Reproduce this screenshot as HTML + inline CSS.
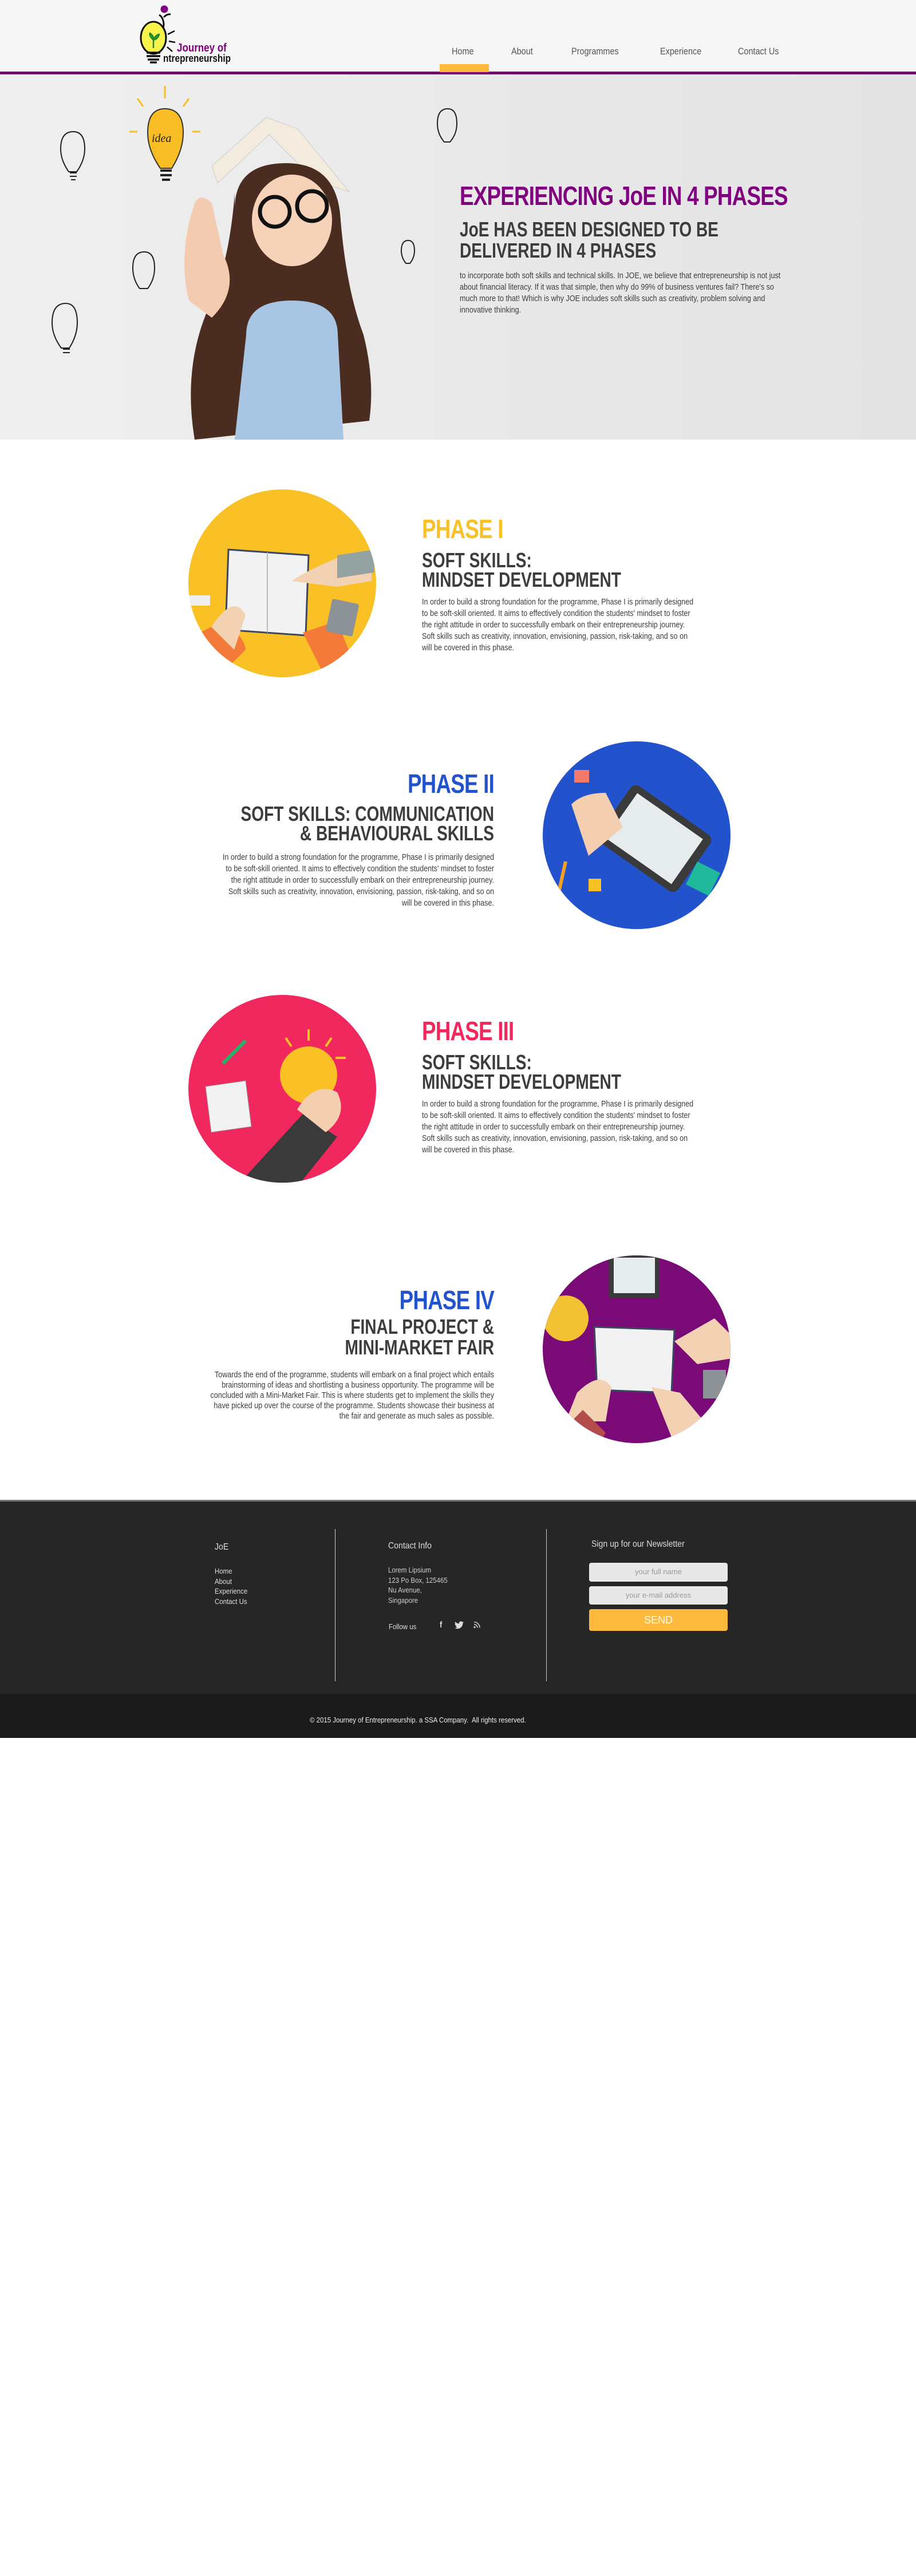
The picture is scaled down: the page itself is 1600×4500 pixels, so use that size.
<!DOCTYPE html>
<html><head><meta charset="utf-8"><style>
*{margin:0;padding:0;box-sizing:border-box}
body{width:1600px;height:4500px;background:#fff;font-family:"Liberation Sans",sans-serif;color:#3a3a3a;position:relative;overflow:hidden}
.abs{position:absolute}
.hdr{left:0;top:0;width:1600px;height:130px;background:#f6f6f6;border-bottom:5px solid #800080}
.nav{top:80px;font-size:17px;color:#555;transform:scaleX(.85);transform-origin:left top}
.hero{left:0;top:130px;width:1600px;height:638px;background:linear-gradient(90deg,#efefef,#e8e8e8 60%,#e4e4e4)}
.ph{font-weight:bold;font-size:46px;letter-spacing:-1px;line-height:48px;transform:scaleX(.8);transform-origin:left top}
.sub{font-weight:bold;font-size:36px;line-height:34px;color:#3d3d3d;transform:scaleX(.78);transform-origin:left top;white-space:nowrap}
.par{font-size:15px;line-height:20px;color:#3d3d3d;transform:scaleX(.84);transform-origin:left top}
.r{text-align:right;transform-origin:right top}
.circ{border-radius:50%;overflow:hidden}
.foot{left:0;top:2620px;width:1600px;height:339px;background:#262626;border-top:3px solid #777}
.fb{left:0;top:2959px;width:1600px;height:77px;background:#1b1b1b}
.fw{color:#ddd;transform:scaleX(.88);transform-origin:left top;white-space:nowrap}
.inp{background:#e8e8e8;border-radius:4px;color:#999;font-size:13px;text-align:center;line-height:32px}
</style></head><body>

<div class="abs hdr"></div>
<svg class="abs" style="left:230px;top:0" width="200" height="125" viewBox="0 0 200 125">
<circle cx="57" cy="16" r="6.5" fill="#800080"/>
<path d="M48 26 Q55 30 56 42 L55 52 M56 30 Q62 24 68 25" stroke="#111" stroke-width="3" fill="none"/>
<ellipse cx="38" cy="66" rx="22" ry="28" fill="#f8f34a" stroke="#111" stroke-width="3"/>
<path d="M38 84 L38 66 M38 70 Q30 62 32 58 Q38 62 38 68 M38 68 Q44 60 48 60 Q46 68 38 70" stroke="#1a8a2a" stroke-width="2.5" fill="#2aa040"/>
<path d="M26 92 h24 M26 98 h24 M28 104 h20 M32 109 h12" stroke="#111" stroke-width="3.5"/>
<path d="M63 60 l12 -6 M65 72 l11 2 M62 82 l9 8" stroke="#111" stroke-width="2.5"/>
<text x="79" y="90" font-family="Liberation Sans,sans-serif" font-size="20" font-weight="bold" fill="#800080" transform="scale(.85,1)" transform-origin="79 90">Journey of</text>
<text x="55" y="108" font-family="Liberation Sans,sans-serif" font-size="18" font-weight="bold" fill="#111" textLength="118" lengthAdjust="spacingAndGlyphs">ntrepreneurship</text>
</svg>
<div class="abs" style="left:768px;top:112px;width:86px;height:14px;background:#fdb93b"></div>
<div class="abs nav" style="left:789px">Home</div>
<div class="abs nav" style="left:893px">About</div>
<div class="abs nav" style="left:998px">Programmes</div>
<div class="abs nav" style="left:1153px">Experience</div>
<div class="abs nav" style="left:1289px">Contact Us</div>

<div class="abs hero"></div>
<svg class="abs" style="left:0;top:130px" width="900" height="640">
<g stroke="#222" stroke-width="2" fill="none">
<path d="M128 100 q-22 0 -22 30 q0 20 14 40 h14 q14 -20 14 -40 q0 -30 -20 -30z"/><path d="M122 172 h12 M122 178 h12 M124 184 h8"/>
<path d="M252 310 q-20 0 -20 28 q0 20 12 36 h14 q12 -16 12 -36 q0 -28 -18 -28z"/>
<path d="M115 400 q-24 0 -24 34 q0 22 16 44 h14 q14 -22 14 -44 q0 -34 -20 -34z"/><path d="M110 480 h12 M110 486 h12"/>
<path d="M782 60 q-18 0 -18 26 q0 18 12 32 h10 q12 -14 12 -32 q0 -26 -16 -26z"/>
<path d="M713 290 q-12 0 -12 18 q0 12 8 22 h7 q8 -10 8 -22 q0 -18 -11 -18z"/>
</g>
<path d="M288 60 q-30 0 -30 42 q0 30 22 62 h20 q20 -32 20 -62 q0 -42 -32 -42z" fill="#f8bd24" stroke="#333" stroke-width="2"/>
<path d="M280 168 h20 M280 176 h20 M283 184 h14" stroke="#222" stroke-width="4"/>
<text x="265" y="118" font-family="Liberation Serif,serif" font-style="italic" font-size="20" fill="#222">idea</text>
<g stroke="#f8bd24" stroke-width="3"><path d="M288 20 v22 M240 42 l10 14 M330 42 l-10 14 M226 100 h14 M336 100 h14"/></g>
</svg>
<svg class="abs" style="left:300px;top:195px" width="380" height="573" viewBox="0 0 380 573">
<path d="M70 95 L165 10 L220 30 L310 140 L250 120 L170 40 L80 125z" fill="#f3ebdd" stroke="#ccc"/>
<path d="M110 170 q0 -80 90 -80 q90 0 95 100 q10 120 40 200 q20 80 10 150 L40 573 q-20 -120 20 -220 q40 -80 50 -210z" fill="#4a2d20"/>
<ellipse cx="210" cy="190" rx="70" ry="80" fill="#f6d2b8"/>
<circle cx="180" cy="175" r="26" fill="none" stroke="#111" stroke-width="7"/>
<circle cx="245" cy="165" r="26" fill="none" stroke="#111" stroke-width="7"/>
<path d="M130 390 q0 -60 80 -60 q80 0 80 60 L300 573 H110z" fill="#a8c6e4"/>
<path d="M30 330 q-20 -80 10 -170 q10 -20 30 0 l20 90 q30 60 -20 110z" fill="#f3cbb0"/>
</svg>
<div class="abs ph" style="left:803px;top:318px;color:#800080;white-space:nowrap">EXPERIENCING JoE IN 4 PHASES</div>
<div class="abs sub" style="left:803px;top:382px;line-height:37px">JoE HAS BEEN DESIGNED TO BE<br>DELIVERED IN 4 PHASES</div>
<div class="abs par" style="left:803px;top:472px;width:670px">to incorporate both soft skills and technical skills. In JOE, we believe that entrepreneurship is not just about financial literacy. If it was that simple, then why do 99% of business ventures fail? There's so much more to that! Which is why JOE includes soft skills such as creativity, problem solving and innovative thinking.</div>

<!-- Phase I -->
<div class="abs circ" style="left:329px;top:855px;width:328px;height:328px;background:#f9c125">
<svg width="328" height="328"><path d="M70 105 L210 115 L205 255 L65 245z" fill="#f2f2f2" stroke="#3b4660" stroke-width="3"/><path d="M138 110 v140" stroke="#bbb" stroke-width="2"/><path d="M180 160 q30 -20 80 -40 l60 -10 v50 l-60 10z" fill="#f3d2b4"/><path d="M260 115 l65 -10 v40 l-65 10z" fill="#94a3a2"/><path d="M0 260 l60 -30 q40 30 40 50 l-60 60z" fill="#f47a39"/><path d="M40 240 q40 -60 60 -20 l-20 60z" fill="#f3d2b4"/><path d="M200 250 l60 -20 l40 100 h-60z" fill="#f47a39"/><rect x="245" y="195" width="48" height="58" rx="4" fill="#8c9296" transform="rotate(12 269 224)"/><rect x="0" y="185" width="38" height="18" fill="#eee"/></svg></div>
<div class="abs ph" style="left:737px;top:900px;color:#f9c125">PHASE I</div>
<div class="abs sub" style="left:737px;top:962px">SOFT SKILLS:<br>MINDSET DEVELOPMENT</div>
<div class="abs par" style="left:737px;top:1042px;width:575px">In order to build a strong foundation for the programme, Phase I is primarily designed to be soft-skill oriented. It aims to effectively condition the students' mindset to foster the right attitude in order to successfully embark on their entrepreneurship journey. Soft skills such as creativity, innovation, envisioning, passion, risk-taking, and so on will be covered in this phase.</div>

<!-- Phase II -->
<div class="abs ph r" style="left:263px;top:1345px;width:600px;color:#2353cc">PHASE II</div>
<div class="abs sub r" style="left:163px;top:1405px;width:700px">SOFT SKILLS: COMMUNICATION<br>&amp; BEHAVIOURAL SKILLS</div>
<div class="abs par r" style="left:288px;top:1488px;width:575px">In order to build a strong foundation for the programme, Phase I is primarily designed to be soft-skill oriented. It aims to effectively condition the students' mindset to foster the right attitude in order to successfully embark on their entrepreneurship journey. Soft skills such as creativity, innovation, envisioning, passion, risk-taking, and so on will be covered in this phase.</div>
<div class="abs circ" style="left:948px;top:1295px;width:328px;height:328px;background:#2353cc">
<svg width="328" height="328"><rect x="110" y="110" width="170" height="120" rx="12" fill="#3a3a3a" transform="rotate(35 195 170)"/><rect x="125" y="122" width="140" height="96" fill="#e6ebee" transform="rotate(35 195 170)"/><path d="M50 110 q20 -20 60 -20 l30 60 l-60 50z" fill="#f3cfb0"/><rect x="55" y="50" width="26" height="22" fill="#f47a6a"/><rect x="80" y="240" width="22" height="22" fill="#f9c125"/><path d="M270 210 l40 20 l-20 40 l-40 -20z" fill="#1fb89a"/><path d="M40 210 l-20 90" stroke="#f4a020" stroke-width="6"/></svg></div>

<!-- Phase III -->
<div class="abs circ" style="left:329px;top:1738px;width:328px;height:328px;background:#f0285d">
<svg width="328" height="328"><circle cx="210" cy="140" r="50" fill="#f9c125"/><path d="M30 160 l70 -10 l10 80 l-70 10z" fill="#f2f2f2" stroke="#999"/><path d="M90 328 l110 -120 l60 40 l-80 100z" fill="#3a3a3a"/><path d="M190 200 q30 -50 70 -30 q20 40 -20 70z" fill="#f3cfb0"/><path d="M60 120 l40 -40" stroke="#2ab06a" stroke-width="6"/><g stroke="#f9c125" stroke-width="4"><path d="M210 60 v20 M250 75 l-10 15 M170 75 l10 15 M275 110 h-18"/></g></svg></div>
<div class="abs ph" style="left:737px;top:1777px;color:#f0285d">PHASE III</div>
<div class="abs sub" style="left:737px;top:1839px">SOFT SKILLS:<br>MINDSET DEVELOPMENT</div>
<div class="abs par" style="left:737px;top:1919px;width:575px">In order to build a strong foundation for the programme, Phase I is primarily designed to be soft-skill oriented. It aims to effectively condition the students' mindset to foster the right attitude in order to successfully embark on their entrepreneurship journey. Soft skills such as creativity, innovation, envisioning, passion, risk-taking, and so on will be covered in this phase.</div>

<!-- Phase IV -->
<div class="abs ph r" style="left:263px;top:2247px;width:600px;color:#2353cc">PHASE IV</div>
<div class="abs sub r" style="left:163px;top:2300px;width:700px;line-height:36px">FINAL PROJECT &amp;<br>MINI-MARKET FAIR</div>
<div class="abs par r" style="left:268px;top:2393px;width:595px;line-height:18px">Towards the end of the programme, students will embark on a final project which entails brainstorming of ideas and shortlisting a business opportunity. The programme will be concluded with a Mini-Market Fair. This is where students get to implement the skills they have picked up over the course of the programme. Students showcase their business at the fair and generate as much sales as possible.</div>
<div class="abs circ" style="left:948px;top:2193px;width:328px;height:328px;background:#7a0a75">
<svg width="328" height="328"><path d="M90 125 L230 130 L225 240 L95 235z" fill="#f2f2f2" stroke="#3b4660" stroke-width="3"/><rect x="120" y="0" width="80" height="70" fill="#e6ebee" stroke="#3a3a3a" stroke-width="8"/><circle cx="40" cy="110" r="40" fill="#f2c232"/><path d="M230 150 l70 -40 l30 30 v40 l-60 10z" fill="#f3d2b4"/><path d="M60 240 q40 -40 60 -10 l-10 60 h-70z" fill="#f3d2b4"/><path d="M190 230 l50 10 l50 60 l-60 30z" fill="#f3d2b4"/><path d="M40 300 l30 -30 l40 40 l-20 30z" fill="#b54c4c"/><rect x="280" y="200" width="40" height="50" fill="#8c9296"/></svg></div>

<!-- footer -->
<div class="abs foot"></div>
<div class="abs" style="left:585px;top:2671px;width:1px;height:266px;background:#ccc"></div>
<div class="abs" style="left:954px;top:2671px;width:1px;height:266px;background:#ccc"></div>
<div class="abs fw" style="left:375px;top:2694px;font-size:16px">JoE</div>
<div class="abs fw" style="left:375px;top:2736px;font-size:13px;line-height:17.5px">Home<br>About<br>Experience<br>Contact Us</div>
<div class="abs fw" style="left:678px;top:2692px;font-size:16px">Contact Info</div>
<div class="abs fw" style="left:678px;top:2734px;font-size:13px;line-height:17.5px;color:#ccc">Lorem Lipsium<br>123 Po Box, 125465<br>Nu Avenue,<br>Singapore</div>
<div class="abs fw" style="left:679px;top:2834px;font-size:13px">Follow us</div>
<div class="abs fw" style="left:768px;top:2830px;font-size:15px;font-weight:bold">f</div>
<svg class="abs" style="left:794px;top:2832px" width="16" height="14" viewBox="0 0 24 20"><path d="M24 2.4a10 10 0 0 1-2.8.8A5 5 0 0 0 23.3.4a10 10 0 0 1-3.1 1.2A4.9 4.9 0 0 0 11.8 6 14 14 0 0 1 1.7.9a4.9 4.9 0 0 0 1.5 6.6A5 5 0 0 1 1 6.9a4.9 4.9 0 0 0 3.9 4.8 5 5 0 0 1-2.2.1 4.9 4.9 0 0 0 4.6 3.4A9.9 9.9 0 0 1 0 17.2 14 14 0 0 0 7.5 19.4c9.1 0 14-7.5 14-14v-.6A10 10 0 0 0 24 2.4z" fill="#ddd"/></svg>
<svg class="abs" style="left:827px;top:2832px" width="12" height="13" viewBox="0 0 12 12"><circle cx="2" cy="10" r="1.6" fill="#ccc"/><path d="M1 5a6 6 0 0 1 6 6M1 1a10 10 0 0 1 10 10" stroke="#ccc" stroke-width="1.6" fill="none"/></svg>
<div class="abs fw" style="left:1033px;top:2689px;font-size:16px">Sign up for our Newsletter</div>
<div class="abs inp" style="left:1029px;top:2730px;width:242px;height:33px">your full name</div>
<div class="abs inp" style="left:1029px;top:2771px;width:242px;height:32px">your e-mail address</div>
<div class="abs" style="left:1029px;top:2811px;width:242px;height:38px;background:#fdb93b;border-radius:4px;color:#fff;text-align:center;line-height:38px;font-size:18px">SEND</div>
<div class="abs fb"></div>
<div class="abs fw" style="left:541px;top:2997px;font-size:13px;color:#eee">© 2015 Journey of Entrepreneurship. a SSA Company.&nbsp; All rights reserved.</div>
</body></html>
